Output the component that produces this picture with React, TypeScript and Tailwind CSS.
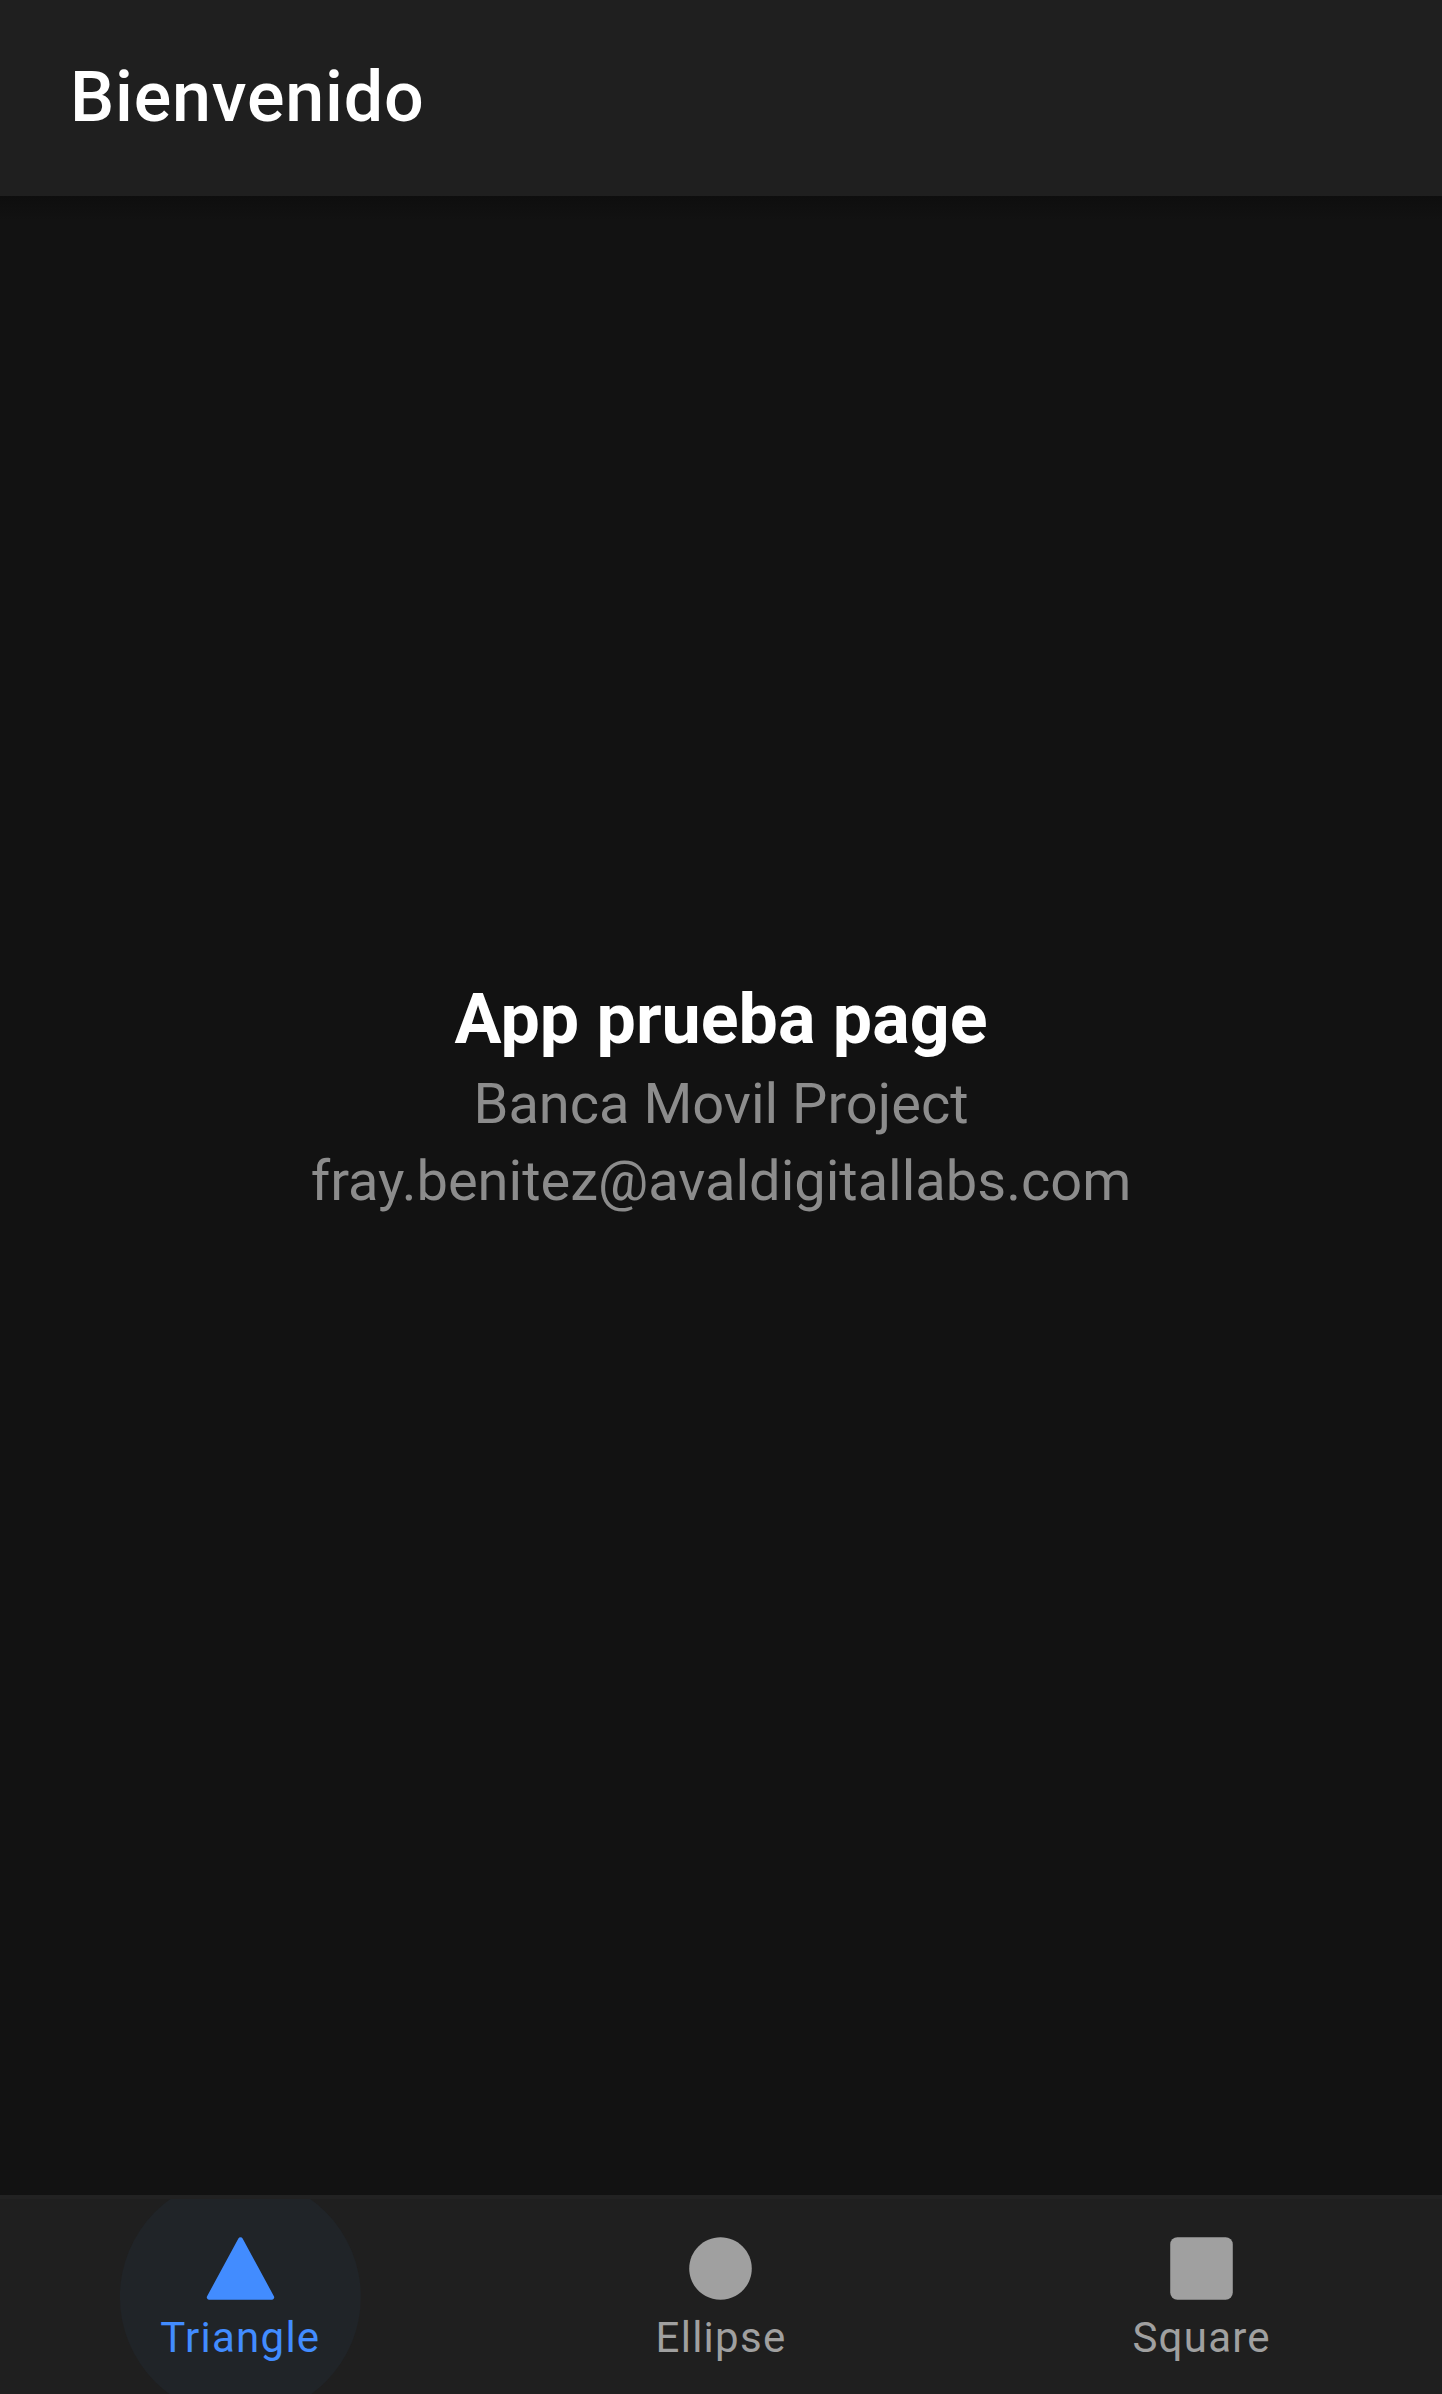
const tabs = [
  {
    label: "Triangle",
    active: true,
    path: "M464 464H48a16 16 0 01-14.070-23.620l208-384a16 16 0 0128.140 0l208 384A16 16 0 01464 464z",
  },
  {
    label: "Ellipse",
    active: false,
    path: "M256 464C141.310 464 48 370.690 48 256S141.310 48 256 48s208 93.310 208 208-93.310 208-208 208z",
  },
  {
    label: "Square",
    active: false,
    path: "M416 464H96a48.050 48.050 0 01-48-48V96a48.050 48.050 0 0148-48h320a48.050 48.050 0 0148 48v320a48.050 48.050 0 01-48 48z",
  },
];

export default function App() {
  return (
    <div className="flex h-[2394px] w-[1442px] flex-col overflow-hidden bg-[#121212] font-[Roboto,sans-serif] text-white">
      <header className="flex h-[196px] shrink-0 items-center bg-[#1f1f1f] px-[70px] pb-[2px]">
        <h1 className="text-[70px] leading-[84px] font-medium tracking-[0.84px]">Bienvenido</h1>
      </header>
      <div className="h-[24px] shrink-0 bg-linear-to-b from-[#0e0e0e] to-[#121212]" />
      <main className="flex flex-1 flex-col items-center gap-px pt-[753px] text-center">
        <strong className="text-[70px] leading-[92px] font-bold">App prueba page</strong>
        <p className="text-[56px] leading-[76px] text-[#8c8c8c]">Banca Movil Project</p>
        <p className="text-[56px] leading-[76px] text-[#8c8c8c]">fray.benitez@avaldigitallabs.com</p>
      </main>
      <nav className="grid h-[199px] shrink-0 grid-cols-3 border-t-4 border-[#222222] bg-[#1f1f1f]">
        {tabs.map((t) => (
          <div
            key={t.label}
            className={
              "relative flex flex-col items-center overflow-hidden pt-[31px] " +
              (t.active ? "text-[#428cff]" : "text-[#a0a0a0]")
            }
          >
            {t.active && (
              <span className="absolute top-1/2 left-1/2 size-[240.300px] -translate-x-1/2 -translate-y-1/2 rounded-full bg-[#202428]" />
            )}
            <svg className="relative size-[77px]" viewBox="0 0 512 512" fill="currentColor">
              <path d={t.path} />
            </svg>
            <span className="relative mt-[6px] text-[42px] leading-[49px] tracking-[1.26px]">{t.label}</span>
          </div>
        ))}
      </nav>
    </div>
  );
}
